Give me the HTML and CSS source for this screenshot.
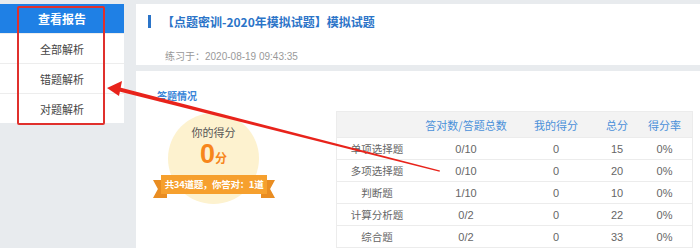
FILE: index.html
```html
<!DOCTYPE html>
<html lang="zh-CN">
<head>
    <meta charset="UTF-8">
    <title>查看报告</title>
    <link rel="stylesheet" href="styles.css">
</head>
<body>
    <div class="page">
        <div class="sidebar">
            <div class="side-head">查看报告</div>
            <div class="side-item">全部解析</div>
            <div class="side-item">错题解析</div>
            <div class="side-item">对题解析</div>
            <div class="mark-box"></div>
        </div>
        <div class="main">
            <div class="card top-card">
                <h1 class="title">【点题密训-2020年模拟试题】模拟试题</h1>
                <div class="date">练习于：2020-08-19 09:43:35</div>
            </div>
            <div class="card body-card">
                <div class="summary">
                    <div class="section-title">答题情况</div>
                    <div class="score-wrap">
                        <div class="circle">
                            <div class="score-label">你的得分</div>
                            <div class="score"><span class="num">0</span><span class="unit">分</span></div>
                        </div>
                        <div class="ribbon">
                            <span class="tail tail-l"></span>
                            <span class="tail tail-r"></span>
                            <span class="band">共34道题，你答对：1道</span>
                        </div>
                    </div>
                </div>
                <table class="stats">
                    <thead>
                        <tr><th></th><th>答对数/答题总数</th><th>我的得分</th><th>总分</th><th>得分率</th></tr>
                    </thead>
                    <tbody>
                        <tr><td>单项选择题</td><td>0/10</td><td>0</td><td>15</td><td>0%</td></tr>
                        <tr><td>多项选择题</td><td>0/10</td><td>0</td><td>20</td><td>0%</td></tr>
                        <tr><td>判断题</td><td>1/10</td><td>0</td><td>10</td><td>0%</td></tr>
                        <tr><td>计算分析题</td><td>0/2</td><td>0</td><td>22</td><td>0%</td></tr>
                        <tr><td>综合题</td><td>0/2</td><td>0</td><td>33</td><td>0%</td></tr>
                    </tbody>
                </table>
            </div>
        </div>
    </div>
    <!-- annotation arrow -->
    <svg class="arrow" width="700" height="248" viewBox="0 0 700 248">
        <polygon points="120,87.5 440,170.5 439.6,171.8 119.3,91.6" fill="#e8231b"/>
        <polygon points="107,88 122,81 119,96" fill="#e8231b"/>
    </svg>
</body>
</html>
```

FILE: styles.css
```css
body {
    margin: 0;
    padding: 0;
    background-color: #e8ebee;
    font-family: "Noto Sans CJK SC", sans-serif;
    width: 700px;
    height: 248px;
    overflow: hidden;
    position: relative;
}
.page {
    display: flex;
    gap: 12px;
    padding-top: 4px;
}
.sidebar {
    width: 124px;
    background: #FFFFFF;
    align-self: flex-start;
    position: relative;
}
.side-head {
    height: 29px;
    line-height: 29px;
    background-color: #1f80e5;
    color: #FFFFFF;
    text-align: center;
    font-size: 12px;
    font-weight: bold;
}
.side-item {
    height: 30px;
    line-height: 30px;
    text-align: center;
    font-size: 11px;
    color: #444;
    border-top: 1px solid #ededed;
    box-sizing: border-box;
}
.mark-box {
    position: absolute;
    left: 17px;
    top: 2px;
    width: 84px;
    height: 115px;
    border: 2px solid #e0302c;
    border-radius: 2px;
}
.main {
    flex: 1;
    display: flex;
    flex-direction: column;
    gap: 6px;
}
.card {
    background: #FFFFFF;
}
.top-card {
    height: 61px;
    padding: 11px 0 0 12px;
    box-sizing: border-box;
}
.title {
    margin: 0;
    font-size: 12px;
    font-weight: bold;
    color: #2b74c8;
    border-left: 3px solid #2b74c8;
    padding-left: 11px;
    line-height: 13px;
    height: 13px;
}
.date {
    margin-top: 20px;
    padding-left: 17px;
    font-family: "Liberation Sans", "Noto Sans CJK SC", sans-serif;
    font-size: 10px;
    color: #999;
}
.body-card {
    height: 177px;
    display: flex;
}
.summary {
    width: 200px;
}
.section-title {
    margin: 17px 0 0 21px;
    font-size: 10px;
    font-weight: bold;
    color: #3a86d8;
}
.score-wrap {
    position: relative;
    margin-top: 10px;
    height: 100px;
}
.circle {
    margin-left: 32px;
    width: 91px;
    height: 91px;
    border-radius: 50%;
    background-color: #fdf2cf;
    text-align: center;
    box-sizing: border-box;
    padding-top: 11px;
}
.score-label {
    font-size: 11px;
    color: #555;
}
.score {
    color: #f7861c;
    font-weight: bold;
    line-height: 28px;
}
.score .num {
    font-size: 27px;
    font-family: Arial, "Liberation Sans", sans-serif;
}
.score .unit {
    font-size: 12px;
}
.ribbon {
    position: absolute;
    left: 17px;
    top: 62px;
    width: 122px;
    height: 23px;
}
.band {
    position: absolute;
    left: 8px;
    right: 8px;
    top: 0;
    height: 19px;
    line-height: 19px;
    background-color: #f6a02e;
    color: #FFFFFF;
    font-size: 9.5px;
    font-weight: bold;
    text-align: center;
    white-space: nowrap;
    letter-spacing: -0.3px;
}
.tail {
    position: absolute;
    top: 5px;
    width: 14px;
    height: 18px;
    background-color: #e98d22;
}
.tail-l {
    left: 0;
    clip-path: polygon(0 0, 100% 0, 100% 100%, 0 100%, 35% 50%);
}
.tail-r {
    right: 0;
    clip-path: polygon(0 0, 100% 0, 65% 50%, 100% 100%, 0 100%);
}
.stats {
    margin-top: 40px;
    width: 357px;
    height: 131px;
    border-collapse: collapse;
    border: 1px solid #ececec;
    font-size: 10.5px;
    color: #666;
    text-align: center;
    align-self: flex-start;
}
.stats th {
    background-color: #f3f3f3;
    color: #4a90d9;
    font-weight: normal;
    font-size: 11px;
    height: 23px;
}
.stats td {
    border-top: 1px solid #ececec;
    height: 21px;
    padding: 0;
}
.stats td:not(:first-child) {
    font-family: "Liberation Sans", sans-serif;
    font-size: 11px;
}
.stats th:nth-child(1) { width: 78px; }
.stats th:nth-child(2) { width: 96px; }
.stats th:nth-child(3) { width: 80px; }
.stats th:nth-child(4) { width: 38px; }
.arrow {
    position: absolute;
    left: 0;
    top: 0;
    pointer-events: none;
}
```
